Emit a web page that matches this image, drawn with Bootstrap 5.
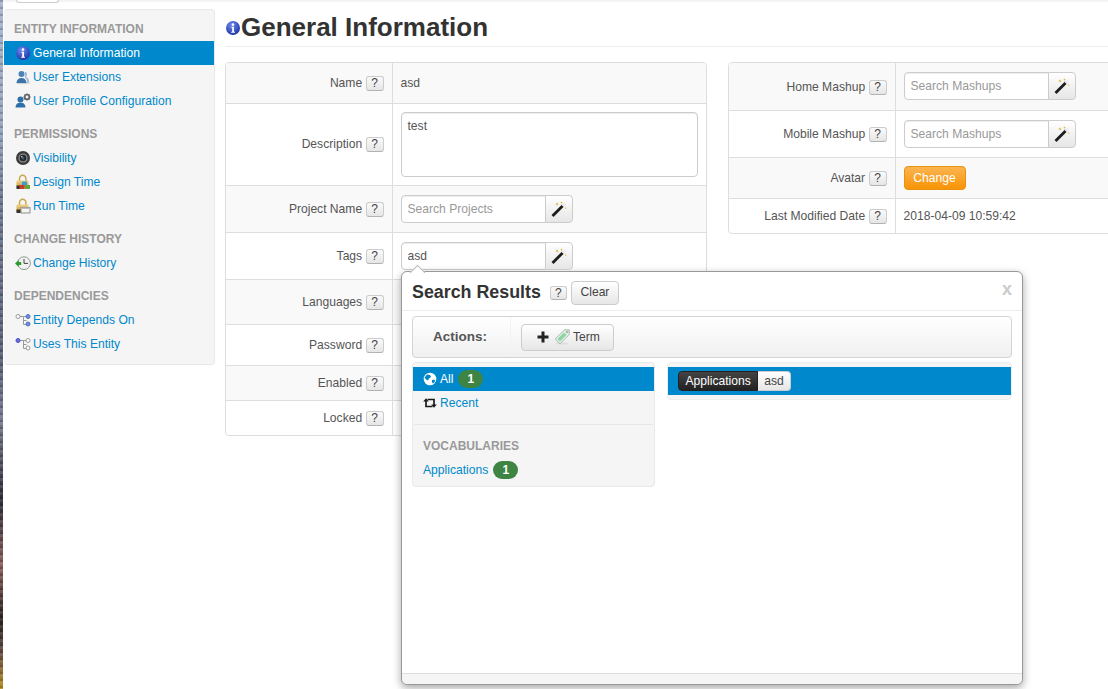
<!DOCTYPE html>
<html lang="en">
<head>
  <meta charset="UTF-8">
  <title>General Information</title>
  <meta name="viewport" content="width=device-width, initial-scale=1">
  <link href="https://cdn.jsdelivr.net/npm/bootstrap@5.3.3/dist/css/bootstrap.min.css" rel="stylesheet">
  <style>
    html, body { height: 100%; }
    body {
      font-family: "Liberation Sans", Arial, sans-serif;
      font-size: 12px;
      color: #555;
      overflow: hidden;
      position: relative;
      background: linear-gradient(180deg, #efefef 0, #fff 3px);
    }
    a { color: #0088cc; text-decoration: none; }
    .page-wrap { display: flex; height: 689px; width: 1108px; }
    .wallpaper {
      width: 3px;
      flex: none;
      background:
        repeating-linear-gradient(180deg, rgba(0,0,0,.16) 0 2px, rgba(255,255,255,.1) 2px 5px, transparent 5px 7px),
        linear-gradient(180deg, #a4b5cd 0, #93a4bd 130px, #6b7890 200px, #5b6075 360px, #777a90 420px, #2c2c38 500px, #8a5f5a 565px, #2a211f 620px, #5e4740 650px, #b98f22 689px);
    }
    .side-col { width: 212px; flex: none; margin-left: 1px; }
    .top-stub {
      display: block;
      width: 43px; height: 3px;
      margin: 0 0 6px 12px;
      background: #fff;
      border: 1px solid #ccc;
      border-top: 0;
      border-radius: 0 0 3px 3px;
    }
    .side-panel {
      width: 211px;
      height: 356px;
      background: #f5f5f5;
      border: 1px solid #e8e8e8;
      border-left: 0;
      border-radius: 4px;
      padding-top: 11px;
    }
    .side-head {
      font-size: 12px;
      font-weight: 700;
      color: #999;
      line-height: 16px;
      padding-left: 10px;
      text-transform: uppercase;
      margin: 0 0 4px;
    }
    .side-nav { margin-bottom: 13px; }
    .side-nav .nav-link {
      display: flex;
      align-items: center;
      gap: 2px;
      height: 24px;
      padding: 0 0 0 11px;
      font-size: 12.1px;
      color: #0088cc;
    }
    .side-nav .nav-link.active { background: #0088cc; color: #fff; }
    .side-nav .nav-link svg { width: 16px; height: 16px; flex: none; }

    .main-col { flex: 1; min-width: 0; margin-left: 9px; overflow: hidden; }
    .page-title {
      display: flex;
      align-items: center;
      height: 47px;
      border-bottom: 1px solid #eee;
      margin: 0 0 15px;
      font-family: "Liberation Sans", Arial, sans-serif;
      font-size: 26px;
      font-weight: 700;
      color: #333;
      line-height: 1;
      padding-top: 7px;
    }
    .page-title svg { width: 16px; height: 16px; margin-top: 2px; flex: none; }
    .tables-row { display: flex; gap: 21px; align-items: flex-start; }
    .info-wrap {
      border: 1px solid #ddd;
      border-radius: 4px;
      overflow: hidden;
      flex: none;
      background: #fff;
    }
    .info-wrap.left-t { width: 482px; }
    .info-wrap.right-t { width: 420px; }
    .info-table { --bs-table-striped-bg: #f9f9f9; --bs-table-color: #555; --bs-table-striped-color: #555; font-size: 12.1px; table-layout: fixed; }
    .info-table td { border-bottom: 1px solid #ddd; padding: 0 8px; vertical-align: middle; }
    .info-table tr:last-child td { border-bottom: 0; }
    .info-table td:first-child { border-right: 1px solid #ddd; text-align: right; white-space: nowrap; width: 166px; }
    .info-table .label-low td:first-child { padding-top: 2px; }
    .h35 { height: 35px; }
    .h40 { height: 40px; }
    .h41 { height: 41px; }
    .h45 { height: 45px; }
    .h47 { height: 47px; }
    .h82 { height: 82px; }
    .help-btn {
      display: inline-block;
      width: 18px; height: 15px;
      margin-left: 0;
      padding: 0;
      font-size: 12px;
      line-height: 13px;
      color: #444;
      text-align: center;
      background: linear-gradient(180deg, #fafafa, #e6e6e6);
      border: 1px solid #ccc;
      border-bottom-color: #b3b3b3;
      border-radius: 3px;
      vertical-align: 0;
    }
    .desc-input {
      width: 297px; height: 65px;
      font-size: 12.1px;
      padding: 4px 6px;
      color: #555;
      border: 1px solid #ccc;
      border-radius: 4px;
      resize: none;
      box-shadow: inset 0 1px 1px rgba(0,0,0,.075);
    }
    .search-group { width: 172px; flex-wrap: nowrap; }
    .search-group .form-control {
      height: 28px;
      min-height: 28px;
      padding: 4px 6px;
      font-size: 12.1px;
      color: #555;
      border-color: #ccc;
      border-radius: 4px 0 0 4px;
      box-shadow: inset 0 1px 1px rgba(0,0,0,.075);
    }
    .search-group .form-control::placeholder { color: #999; opacity: 1; }
    .search-group .btn {
      width: 28px; height: 28px;
      padding: 0;
      flex: none;
      display: flex;
      align-items: center;
      justify-content: center;
      background: linear-gradient(180deg, #fff, #e6e6e6);
      border: 1px solid #ccc;
      border-radius: 0 4px 4px 0;
      margin-left: -1px;
    }
    .search-group .btn svg { width: 16px; height: 16px; }
    .btn-change {
      width: 62px; height: 24px;
      padding: 1px 0 0;
      font-size: 12.1px;
      line-height: 21px;
      color: #fff;
      background: linear-gradient(180deg, #fbb450, #f89406);
      border: 1px solid #e8930f;
      border-radius: 4px;
    }
    .under-btn { display: block; width: 60px; height: 24px; border-radius: 4px; }
    .under-orange { background: #b9781e; }
    .under-blue { background: #0c63b0; height: 20px; }
    .under-dark { background: #444; height: 20px; }

    .results-pop {
      position: absolute;
      left: 401px; top: 271px;
      width: 622px; height: 414px;
      background: #fff;
      border: 1px solid #999;
      border-radius: 6px;
      box-shadow: 0 3px 8px rgba(0,0,0,.35);
      display: flex;
      flex-direction: column;
    }
    .results-pop::before {
      content: "";
      position: absolute;
      left: 10px; top: -5px;
      width: 11px; height: 11px;
      background: #fff;
      border-left: 1px solid #bbb;
      border-top: 1px solid #bbb;
      transform: rotate(45deg);
    }
    .pop-head {
      position: relative;
      display: flex;
      align-items: center;
      height: 39px;
      padding: 3px 10px 0;
      border-bottom: 1px solid #eee;
    }
    .pop-title { font-size: 17.85px; font-weight: 700; color: #333; margin: 0; }
    .pop-head .help-btn { margin-left: 9px; width: 17px; height: 14px; line-height: 12px; }
    .btn-clear {
      width: 48px; height: 24px;
      padding: 0;
      margin-left: 4px;
      font-size: 12.1px;
      color: #444;
      background: linear-gradient(180deg, #fff, #e6e6e6);
      border: 1px solid #ccc;
      border-radius: 4px;
    }
    .btn-x {
      position: absolute;
      right: 10px; top: 7px;
      font-size: 18px;
      font-weight: 700;
      color: #ccc;
      line-height: 20px;
    }
    .pop-body { flex: 1; padding: 5px 10px 0; }
    .actions-bar {
      display: flex;
      align-items: stretch;
      height: 42px;
      background: linear-gradient(180deg, #fff, #f0f0f0);
      border: 1px solid #d4d4d4;
      border-radius: 4px;
    }
    .actions-label {
      width: 98px;
      border-right: 1px solid #f2f2f2;
      display: flex;
      align-items: center;
      padding-left: 20px;
      font-size: 13.5px;
      font-weight: 700;
      color: #555;
    }
    .actions-btns { display: flex; align-items: center; padding-left: 10px; }
    .btn-term {
      display: flex;
      align-items: center;
      justify-content: center;
      gap: 3px;
      width: 93px; height: 27px;
      padding: 0;
      font-size: 12.1px;
      color: #444;
      background: linear-gradient(180deg, #fff, #e6e6e6);
      border: 1px solid #ccc;
      border-radius: 4px;
    }
    .btn-term svg { width: 16px; height: 16px; flex: none; }
    .result-cols { display: flex; gap: 12px; margin-top: 4px; align-items: flex-start; }
    .result-side {
      width: 243px; height: 125px;
      background: #f5f5f5;
      border: 1px solid #e8e8e8;
      border-radius: 4px;
      padding-top: 4px;
    }
    .result-side .nav-link {
      display: flex;
      align-items: center;
      gap: 3px;
      height: 24px;
      padding: 0 0 0 10px;
      font-size: 12.1px;
      color: #0088cc;
    }
    .result-side .nav-link.active { background: #0088cc; color: #fff; }
    .result-side .nav-link svg { width: 14px; height: 14px; flex: none; }
    .count-pill {
      display: inline-block;
      width: 25px; height: 18px;
      margin-left: 2px;
      background: #3e8544;
      color: #fff;
      border-radius: 9px;
      font-size: 12px;
      font-weight: 700;
      line-height: 18px;
      text-align: center;
    }
    .result-rule { border-top: 1px solid #e8e8e8; margin: 9px 1px 0; }
    .vocab-head { font-size: 12px; font-weight: 700; color: #999; line-height: 16px; margin: 13px 0 0 10px; }
    .vocab-link { display: flex; align-items: center; height: 24px; margin: 4px 0 0 10px; font-size: 12.1px; }
    .vocab-link .count-pill { margin-left: 5px; }
    .result-main {
      flex: 1;
      height: 38px;
      background: #f5f5f5;
      border: 1px solid #eee;
      border-radius: 4px;
      padding-top: 4px;
    }
    .result-row { background: #0088cc; height: 28px; display: flex; align-items: center; padding-left: 10px; }
    .term-tag { display: flex; height: 20px; font-size: 12.1px; line-height: 18px; }
    .term-kind {
      padding: 0 6.5px;
      color: #fff;
      background: linear-gradient(180deg, #444, #222);
      border: 1px solid #222;
      border-radius: 4px 0 0 4px;
    }
    .term-val {
      padding: 0 6px;
      color: #444;
      background: linear-gradient(180deg, #fff, #e6e6e6);
      border: 1px solid #ccc;
      border-left: 0;
      border-radius: 0 4px 4px 0;
    }
    .pop-foot { height: 11px; background: #f5f5f5; border-top: 1px solid #ddd; border-radius: 0 0 6px 6px; }
    .svg-defs { position: absolute; width: 0; height: 0; }
  </style>
</head>
<body>

<svg class="svg-defs" aria-hidden="true">
  <defs>
    <radialGradient id="blueBall" cx="40%" cy="30%" r="75%">
      <stop offset="0" stop-color="#6f8cf0"/><stop offset="1" stop-color="#1c2fa8"/>
    </radialGradient>
    <linearGradient id="goldLock" x1="0" y1="0" x2="0" y2="1">
      <stop offset="0" stop-color="#f0d48a"/><stop offset="1" stop-color="#c2912f"/>
    </linearGradient>
    <symbol id="ic-info" viewBox="0 0 16 16">
      <circle cx="8" cy="8" r="7" fill="url(#blueBall)"/>
      <circle cx="8" cy="4.600" r="1.300" fill="#fff"/>
      <path d="M6.400 6.800h2.600v5h1v1H6.200v-1h1v-4h-.8z" fill="#fff"/>
    </symbol>
    <symbol id="ic-users" viewBox="0 0 16 16">
      <ellipse cx="8" cy="14" rx="7" ry="1.300" fill="#d5d5d5"/>
      <circle cx="6.500" cy="5" r="3" fill="#4c82b8"/>
      <path d="M1.500 14c.3-3.500 2-5 5-5s4.700 1.500 5 5z" fill="#3a74ad"/>
      <path d="M10 2.400a3 3 0 0 1 .8 5.400c2 .6 3.400 2.400 3.500 5.700h-2c-.3-2.500-1-4-2.500-5.200z" fill="#9dbcd8"/>
    </symbol>
    <symbol id="ic-config" viewBox="0 0 16 16">
      <circle cx="5.500" cy="6.500" r="3" fill="#2f6ea8"/>
      <path d="M.5 14.500c.3-3.500 2-4.700 5-4.700s4.700 1.200 5 4.700z" fill="#2f6ea8"/>
      <circle cx="12" cy="4" r="2.300" fill="none" stroke="#666" stroke-width="1.800"/>
      <path d="M12 .4v1.400M12 6.200v1.400M8.400 4h1.400M14.200 4h1.400M9.500 1.500l1 1M13.500 5.500l1 1M14.500 1.500l-1 1M10.500 5.500l-1 1" stroke="#666" stroke-width="1.100"/>
    </symbol>
    <symbol id="ic-camera" viewBox="0 0 16 16">
      <circle cx="8" cy="8" r="7" fill="#3b3b3b"/>
      <circle cx="8" cy="8" r="4.600" fill="#8a8a8a"/>
      <circle cx="8" cy="8" r="3.300" fill="#20242c"/>
      <circle cx="8" cy="8" r="1.500" fill="#3e5670"/>
      <circle cx="6.800" cy="6.800" r=".7" fill="#dfe6ee"/>
    </symbol>
    <symbol id="ic-lock-a" viewBox="0 0 16 16">
      <path d="M4.500 7V4.500a3.200 3.200 0 0 1 6.400 0V7" fill="none" stroke="#c9a64f" stroke-width="1.500"/>
      <rect x="1.500" y="6.500" width="12" height="8" rx="1" fill="url(#goldLock)"/>
      <rect x="1.500" y="11.500" width="4" height="3.500" fill="#333"/>
      <rect x="7" y="7.500" width="5" height="4" fill="#3b9dd6"/>
      <rect x="4.500" y="11" width="5" height="4" fill="#c93a2f"/>
      <rect x="10" y="11" width="5" height="4" fill="#61a83a"/>
    </symbol>
    <symbol id="ic-lock-b" viewBox="0 0 16 16">
      <path d="M4.500 7V4.500a3.200 3.200 0 0 1 6.400 0V7" fill="none" stroke="#c9a64f" stroke-width="1.500"/>
      <rect x="1.500" y="6.500" width="12" height="8" rx="1" fill="url(#goldLock)"/>
      <rect x="1.500" y="11.500" width="4" height="3.500" fill="#333"/>
      <rect x="6" y="9.500" width="9" height="5.500" fill="#f4f4f4" stroke="#777" stroke-width=".8"/>
      <rect x="6" y="9.500" width="9" height="1.500" fill="#bbb"/>
    </symbol>
    <symbol id="ic-history" viewBox="0 0 16 16">
      <circle cx="9" cy="8.200" r="6.400" fill="#f0f0f0" stroke="#8c9a8e" stroke-width="1"/>
      <path d="M9 4v4.400h4" fill="none" stroke="#444" stroke-width="1"/>
      <path d="M0 8.500l3.700-3.500v2h2.500v3H3.700v2z" fill="#2c9a33"/>
    </symbol>
    <symbol id="ic-dep-a" viewBox="0 0 16 16">
      <path d="M3 4.500h5.500v8h3M8.500 4.500h3M8.500 8.500h3" fill="none" stroke="#999" stroke-width="1"/>
      <circle cx="3" cy="4.500" r="2" fill="#fff" stroke="#999"/>
      <circle cx="13" cy="4.500" r="2" fill="#6f8fe0" stroke="#4f6fc0"/>
      <circle cx="13" cy="12" r="2" fill="#6f8fe0" stroke="#4f6fc0"/>
    </symbol>
    <symbol id="ic-dep-b" viewBox="0 0 16 16">
      <path d="M3 4.500h5.500v8h3M8.500 4.500h3M8.500 8.500h3" fill="none" stroke="#999" stroke-width="1"/>
      <circle cx="3" cy="4.500" r="2" fill="#6a6fe0" stroke="#4a4fc0"/>
      <circle cx="13" cy="4.500" r="2" fill="#fff" stroke="#999"/>
      <circle cx="13" cy="12" r="2" fill="#fff" stroke="#999"/>
    </symbol>
    <symbol id="ic-wand" viewBox="0 0 16 16">
      <path d="M1.500 15L12 4.500" stroke="#1c1c1c" stroke-width="2.800"/>
      <path d="M11.500 5l2.500-2.500" stroke="#ececec" stroke-width="2.800"/>
      <path d="M6 1l.5 1.500L8 3l-1.500.5L6 5l-.5-1.500L4 3l1.500-.5zM10.500 .2l.4 1 1 .4-1 .4-.4 1-.4-1-1-.4 1-.4zM14.800 6l.3.8.8.3-.8.3-.3.8-.3-.8-.8-.3.8-.3z" fill="#d8b63a"/>
    </symbol>
    <symbol id="ic-globe" viewBox="0 0 14 14">
      <circle cx="7" cy="7" r="6.300" fill="#fff"/>
      <path d="M4 2.500l3 .5 1 2-2 1.500-1 2-2-1-1.500-2zM9 8l2.500-.5.5 2-2 2.200-1-1.800z" fill="#0088cc"/>
    </symbol>
    <symbol id="ic-retweet" viewBox="0 0 14 14">
      <path d="M3 5v5.500h6.500M11 9V3.500H4.500" fill="none" stroke="#1a1a1a" stroke-width="1.700"/>
      <path d="M.2 5.500L3 2.300l2.800 3.200zM8.200 8.500L11 11.700l2.800-3.200z" fill="#1a1a1a"/>
    </symbol>
    <symbol id="ic-plus" viewBox="0 0 16 16">
      <path d="M6.500 2.500h3v4h4v3h-4v4h-3v-4h-4v-3h4z" fill="#222"/>
    </symbol>
    <symbol id="ic-tag" viewBox="0 0 16 16">
      <ellipse cx="8" cy="14.500" rx="6" ry="1" fill="#ddd"/>
      <path d="M10.500 .8h4.700v4.700L6 14.800 1.200 10z" fill="#e2f3e6" stroke="#9aa89e" stroke-width=".8"/>
      <path d="M3.500 10L10 3.500l2.500 2.500L6 12.500z" fill="#8ed4a2"/>
      <circle cx="13" cy="3" r=".9" fill="#fff" stroke="#777" stroke-width=".6"/>
    </symbol>
  </defs>
</svg>

<div class="page-wrap">
  <div class="wallpaper"></div>

  <div class="side-col">
    <span class="top-stub"></span>
    <div class="side-panel">
      <p class="side-head">Entity Information</p>
      <nav class="nav flex-column side-nav">
        <a class="nav-link active" href="#"><svg><use href="#ic-info"/></svg>General Information</a>
        <a class="nav-link" href="#"><svg><use href="#ic-users"/></svg>User Extensions</a>
        <a class="nav-link" href="#"><svg><use href="#ic-config"/></svg>User Profile Configuration</a>
      </nav>
      <p class="side-head">Permissions</p>
      <nav class="nav flex-column side-nav">
        <a class="nav-link" href="#"><svg><use href="#ic-camera"/></svg>Visibility</a>
        <a class="nav-link" href="#"><svg><use href="#ic-lock-a"/></svg>Design Time</a>
        <a class="nav-link" href="#"><svg><use href="#ic-lock-b"/></svg>Run Time</a>
      </nav>
      <p class="side-head">Change History</p>
      <nav class="nav flex-column side-nav">
        <a class="nav-link" href="#"><svg><use href="#ic-history"/></svg>Change History</a>
      </nav>
      <p class="side-head">Dependencies</p>
      <nav class="nav flex-column side-nav">
        <a class="nav-link" href="#"><svg><use href="#ic-dep-a"/></svg>Entity Depends On</a>
        <a class="nav-link" href="#"><svg><use href="#ic-dep-b"/></svg>Uses This Entity</a>
      </nav>
    </div>
  </div>

  <div class="main-col">
    <h1 class="page-title"><svg><use href="#ic-info"/></svg>General Information</h1>

    <div class="tables-row">
      <div class="info-wrap left-t">
        <table class="table table-striped mb-0 info-table">
          <tbody>
            <tr class="h40"><td>Name <span class="help-btn">?</span></td><td>asd</td></tr>
            <tr class="h82"><td>Description <span class="help-btn">?</span></td><td><textarea class="desc-input d-block">test</textarea></td></tr>
            <tr class="h47 label-low"><td>Project Name <span class="help-btn">?</span></td><td>
              <div class="input-group search-group"><input class="form-control" placeholder="Search Projects"><button class="btn" type="button"><svg><use href="#ic-wand"/></svg></button></div>
            </td></tr>
            <tr class="h47 label-low"><td>Tags <span class="help-btn">?</span></td><td>
              <div class="input-group search-group"><input class="form-control" value="asd"><button class="btn" type="button"><svg><use href="#ic-wand"/></svg></button></div>
            </td></tr>
            <tr class="h45 label-low"><td>Languages <span class="help-btn">?</span></td><td></td></tr>
            <tr class="h41 label-low"><td>Password <span class="help-btn">?</span></td><td><span class="under-btn under-orange"></span></td></tr>
            <tr class="h35 label-low"><td>Enabled <span class="help-btn">?</span></td><td><span class="under-btn under-blue"></span></td></tr>
            <tr class="h35"><td>Locked <span class="help-btn">?</span></td><td><span class="under-btn under-dark"></span></td></tr>
          </tbody>
        </table>
      </div>

      <div class="info-wrap right-t">
        <table class="table table-striped mb-0 info-table">
          <tbody>
            <tr class="h47 label-low"><td>Home Mashup <span class="help-btn">?</span></td><td>
              <div class="input-group search-group"><input class="form-control" placeholder="Search Mashups"><button class="btn" type="button"><svg><use href="#ic-wand"/></svg></button></div>
            </td></tr>
            <tr class="h47 label-low"><td>Mobile Mashup <span class="help-btn">?</span></td><td>
              <div class="input-group search-group"><input class="form-control" placeholder="Search Mashups"><button class="btn" type="button"><svg><use href="#ic-wand"/></svg></button></div>
            </td></tr>
            <tr class="h41 label-low"><td>Avatar <span class="help-btn">?</span></td><td><button class="btn btn-change" type="button">Change</button></td></tr>
            <tr class="h35"><td>Last Modified Date <span class="help-btn">?</span></td><td>2018-04-09 10:59:42</td></tr>
          </tbody>
        </table>
      </div>
    </div>
  </div>
</div>

<div class="results-pop">
  <div class="pop-head">
    <h3 class="pop-title">Search Results</h3>
    <span class="help-btn">?</span>
    <button class="btn btn-clear" type="button">Clear</button>
    <span class="btn-x">x</span>
  </div>
  <div class="pop-body">
    <div class="actions-bar">
      <div class="actions-label">Actions:</div>
      <div class="actions-btns">
        <button class="btn btn-term" type="button"><svg><use href="#ic-plus"/></svg><svg><use href="#ic-tag"/></svg>Term</button>
      </div>
    </div>
    <div class="result-cols">
      <div class="result-side">
        <nav class="nav flex-column">
          <a class="nav-link active" href="#"><svg><use href="#ic-globe"/></svg>All <span class="count-pill">1</span></a>
          <a class="nav-link" href="#"><svg><use href="#ic-retweet"/></svg>Recent</a>
        </nav>
        <div class="result-rule"></div>
        <p class="vocab-head">VOCABULARIES</p>
        <a class="vocab-link" href="#">Applications <span class="count-pill">1</span></a>
      </div>
      <div class="result-main">
        <div class="result-row">
          <div class="term-tag"><span class="term-kind">Applications</span><span class="term-val">asd</span></div>
        </div>
      </div>
    </div>
  </div>
  <div class="pop-foot"></div>
</div>

<script src="https://cdn.jsdelivr.net/npm/bootstrap@5.3.3/dist/js/bootstrap.bundle.min.js"></script>
</body>
</html>
